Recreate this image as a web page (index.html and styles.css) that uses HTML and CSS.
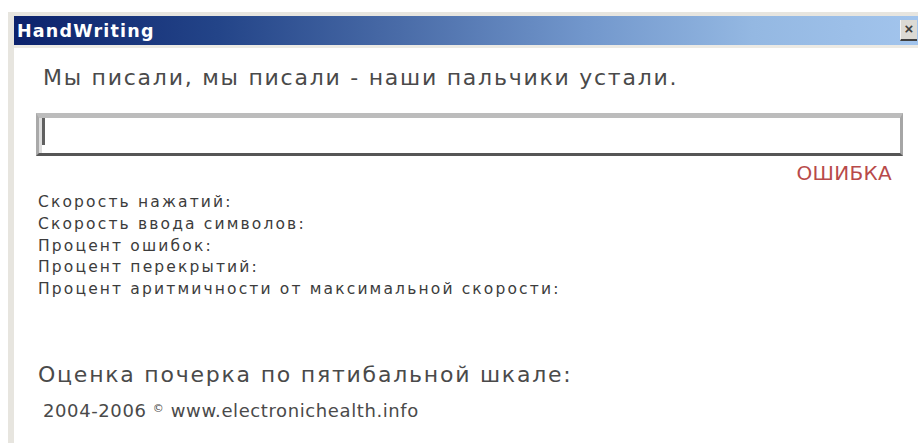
FILE: index.html
```html
<!DOCTYPE html>
<html lang="ru">
<head>
<meta charset="utf-8">
<title>HandWriting</title>
<link rel="stylesheet" href="styles.css">
</head>
<body>
<div class="window">
  <div class="titlebar">
    <span class="title">HandWriting</span>
    <span class="close">×</span>
  </div>
  <div class="client">
    <p class="phrase">Мы писали, мы писали - наши пальчики устали.</p>
    <div class="entry"><span class="caret"></span></div>
    <div class="status">ОШИБКА</div>
    <ul class="stats">
      <li>Скорость нажатий:</li>
      <li>Скорость ввода символов:</li>
      <li>Процент ошибок:</li>
      <li>Процент перекрытий:</li>
      <li>Процент аритмичности от максимальной скорости:</li>
    </ul>
    <p class="grade">Оценка почерка по пятибальной шкале:</p>
    <p class="copy">2004-2006 <span class="sign">©</span> www.electronichealth.info</p>
  </div>
</div>
</body>
</html>
```

FILE: styles.css
```css
html, body {
  margin: 0;
  padding: 0;
  background: #ffffff;
}

body {
  width: 918px;
  height: 443px;
  overflow: hidden;
  font-family: "DejaVu Sans", "Liberation Sans", sans-serif;
}

/* dialog frame, runs past the right edge */
.window {
  margin: 12px 0 0 8px;
  width: 930px;
  height: 431px;
  padding: 4px 0 0 6px;
  background: #e7e5df;
  box-sizing: border-box;
  display: flex;
  flex-direction: column;
}

.titlebar {
  height: 29px;
  flex: none;
  display: flex;
  align-items: center;
  justify-content: space-between;
  background: linear-gradient(to right, #0c226c 0%, #234488 22%, #4a6ca8 42%, #7297cc 62%, #94b8e2 80%, #a4c6ee 100%);
  border-bottom: 3px solid #eceae4;
}

.title {
  padding-left: 3px;
  color: #ffffff;
  font-weight: bold;
  font-size: 17.5px;
  letter-spacing: 1.2px;
}

.close {
  width: 16px;
  height: 19px;
  margin-right: 21px;
  background: #dcdad4;
  border-left: 1px solid #f4f4f4;
  border-bottom: 2px solid #404040;
  color: #404040;
  font-family: "Liberation Sans", sans-serif;
  font-weight: bold;
  font-size: 15px;
  line-height: 18px;
  text-align: center;
}

.client {
  flex: 1;
  background: #ffffff;
  padding: 17px 0 0 22px;
  color: #3a3a3a;
}

.phrase {
  margin: 0 0 0 7px;
  font-size: 22px;
  line-height: 26px;
  letter-spacing: 1.75px;
  color: #4a4a4a;
}

.entry {
  width: 867px;
  height: 43px;
  margin: 22px 0 0 0;
  box-sizing: border-box;
  border-top: 5px solid #bcbcbc;
  border-left: 3px solid #a9a9a9;
  border-right: 3px solid #a6a6a6;
  border-bottom: 3px solid #565656;
  box-shadow: inset 3px 0 0 #dedede;
  padding: 0 0 0 3px;
}

.caret {
  display: block;
  width: 3px;
  height: 27px;
  background: #606060;
}

.status {
  width: 856px;
  text-align: right;
  margin-top: 5px;
  font-size: 20px;
  line-height: 24px;
  color: #b84a4a;
  letter-spacing: 0.3px;
}

.stats {
  list-style: none;
  margin: 7px 0 0 2px;
  padding: 0;
  font-size: 15.5px;
  line-height: 21.75px;
  letter-spacing: 2.15px;
  color: #3c3c3c;
}

.grade {
  margin: 61px 0 0 2px;
  font-size: 22px;
  line-height: 26px;
  letter-spacing: 1.77px;
  color: #4a4a4a;
}

.copy {
  margin: 10px 0 0 7px;
  font-size: 18px;
  line-height: 22px;
  letter-spacing: 0.6px;
  color: #4a4a4a;
}

.sign {
  font-size: 11px;
  vertical-align: 5px;
}
```
